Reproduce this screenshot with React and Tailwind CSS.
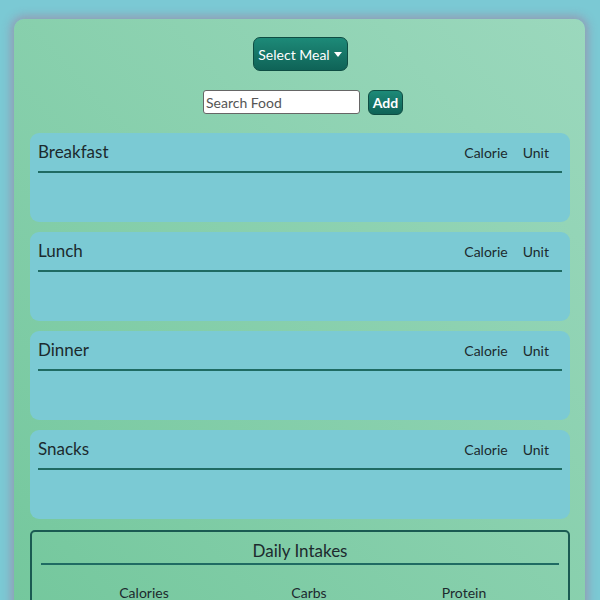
import React from "react";

const meals = ["Breakfast", "Lunch", "Dinner", "Snacks"];

function MealCard({ name }) {
  return (
    <div className="h-[89px] rounded-[9px] bg-[#7bcad4] px-2 pt-[7px]">
      <div className="flex items-center justify-between h-[24px] pr-[13px]">
        <span className="text-[17px] text-[#1c2a2e]">{name}</span>
        <div className="flex gap-[15px] text-[14px] text-[#1c2a2e]">
          <span>Calorie</span>
          <span>Unit</span>
        </div>
      </div>
      <div className="mt-[7px] h-[2px] bg-[#1f6b63]" />
    </div>
  );
}

export default function App() {
  return (
    <div
      className="h-[600px] bg-[#7bc9d4] pt-[19px] px-[14px] overflow-hidden"
      style={{ fontFamily: "Lato, 'Noto Sans', sans-serif" }}
    >
      <div className="h-[620px] w-[571px] rounded-[10px] bg-gradient-to-tr from-[#73c79c] to-[#9bd8bd] shadow-[0_0_10px_3px_rgba(150,150,175,0.9)] pt-[18px] pl-[16px] pr-[15px]">
        <div className="flex justify-center">
          <button className="flex h-[34px] w-[95px] items-center justify-center gap-[4px] rounded-[7px] border border-[#0e4d43] bg-gradient-to-b from-[#1d8a78] to-[#0f6357] text-[14px] text-white">
            Select Meal
            <svg width="8" height="5" viewBox="0 0 8 5"><path d="M0 0h8L4 5z" fill="white" /></svg>
          </button>
        </div>
        <div className="mt-[19px] flex justify-center gap-[8px] pl-[6px]">
          <input
            placeholder="Search Food"
            className="h-[24px] w-[157px] rounded-[3px] border border-[#666] bg-white px-[2px] text-[14px] text-black placeholder:text-[#555] outline-none"
          />
          <button className="h-[25px] w-[35px] rounded-[6px] border border-[#0e4d43] bg-gradient-to-b from-[#1d8a78] to-[#0f6357] text-[14px] font-bold text-white">
            Add
          </button>
        </div>
        <div className="mt-[18px] flex flex-col gap-[10px]">
          {meals.map((m) => (
            <MealCard key={m} name={m} />
          ))}
        </div>
        <div className="mt-[11px] rounded-[5px] border-2 border-[#1a5a52] px-[9px] pt-[7px] h-[120px]">
          <div className="text-center text-[17px] leading-[24px] text-[#1c2a2e]">Daily Intakes</div>
          <div className="h-[2px] bg-[#1f6b63]" />
          <div className="mt-[17px] grid grid-cols-[206px_124px_186px] text-[14px] leading-[21px] text-[#1c2a2e] text-center">
            <span>Calories</span>
            <span>Carbs</span>
            <span>Protein</span>
          </div>
        </div>
      </div>
    </div>
  );
}
